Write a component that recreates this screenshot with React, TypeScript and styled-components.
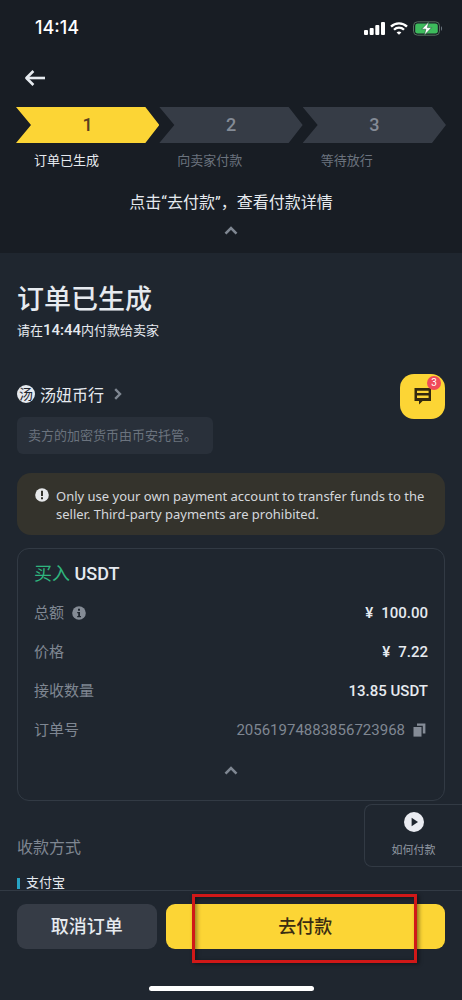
import React from "react";
import styled, { createGlobalStyle } from "styled-components";

const color = {
  header: "#181d24",
  page: "#1f262f",
  panel: "#29303a",
  step: "#363c46",
  line: "#323a44",
  yellow: "#fcd535",
  text: "#e6eaef",
  muted: "#7f8792",
  dim: "#6b737e",
  green: "#2fb57e",
};

const cjk = `"Noto Sans CJK SC", sans-serif`;

const GlobalStyle = createGlobalStyle`
  * { box-sizing: border-box; }
  body {
    margin: 0;
    background: ${color.page};
    color: ${color.text};
    font-family: Roboto, ${cjk};
  }
  button { font-family: inherit; border: 0; padding: 0; background: none; color: inherit; cursor: pointer; }
  h1, p, dl, dd, dt, h2 { margin: 0; font-weight: 400; }
  svg { display: block; }
`;

const Screen = styled.div`
  display: flex;
  flex-direction: column;
  height: 100vh;
`;

const Scroll = styled.main`
  flex: 1;
  min-height: 0;
  overflow-y: auto;
  scrollbar-width: none;
`;

const Header = styled.header`
  background: ${color.header};
  padding: 16px 16px 11px;
`;

const StatusBar = styled.div`
  display: flex;
  align-items: center;
  justify-content: space-between;
  height: 24px;
  padding: 0 3px 0 19px;
`;

const Clock = styled.span`
  font: 500 18px/24px Inter, sans-serif;
  color: #fff;
`;

const StatusIcons = styled.div`
  display: flex;
  align-items: center;
  gap: 5px;
`;

const BackButton = styled.button`
  display: flex;
  align-items: center;
  height: 40px;
  margin: 18px 0 9px 8px;
`;

const Steps = styled.ol`
  display: grid;
  grid-template-columns: repeat(3, 1fr);
  margin: 0;
  padding: 0;
  list-style: none;
`;

const Step = styled.li<{ $active?: boolean }>`
  color: ${(p) => (p.$active ? color.text : color.dim)};
`;

const StepArrow = styled.div<{ $active?: boolean }>`
  height: 36px;
  font: 500 18px/36px Roboto, sans-serif;
  text-align: center;
  color: ${(p) => (p.$active ? "#5a3f1e" : "#848b96")};
  background: ${(p) => (p.$active ? color.yellow : color.step)};
  clip-path: polygon(0 0, calc(100% - 14px) 0, 100% 50%, calc(100% - 14px) 100%, 0 100%, 15px 50%);
`;

const StepLabel = styled.div`
  padding: 8px 0 0 18px;
  font-size: 13px;
  line-height: 20px;
`;

const Hint = styled.p`
  margin-top: 20px;
  font-size: 16px;
  line-height: 24px;
  text-align: center;
`;

const Toggle = styled.button`
  display: flex;
  justify-content: center;
  align-items: center;
  width: 100%;
  height: 24px;
  margin-top: 3px;
  color: ${color.muted};
`;

const Content = styled.div`
  padding: 25px 17px 0;
`;

const Title = styled.h1`
  font: 500 27px/40px ${cjk};
`;

const Deadline = styled.p`
  margin-top: 2px;
  font-size: 13px;
  line-height: 20px;

  strong { font-size: 15px; font-weight: 500; }
`;

const Seller = styled.section`
  display: flex;
  justify-content: space-between;
  align-items: flex-start;
  margin-top: 33px;
`;

const SellerName = styled.button`
  display: flex;
  align-items: center;
  gap: 5px;
  height: 40px;
  font-size: 16px;
`;

const Avatar = styled.span`
  width: 18px;
  height: 18px;
  border-radius: 50%;
  background: ${color.text};
  color: ${color.page};
  font-size: 14px;
  line-height: 18px;
  text-align: center;
`;

const ChevronSlot = styled.span`
  padding-left: 5px;
  color: ${color.muted};
`;

const Tag = styled.p`
  margin-top: 3px;
  padding: 0 16px 0 11px;
  border-radius: 6px;
  background: ${color.panel};
  color: ${color.dim};
  font-size: 13px;
  line-height: 37px;
`;

const ChatButton = styled.button`
  position: relative;
  display: flex;
  align-items: center;
  justify-content: center;
  width: 45px;
  height: 45px;
  border-radius: 14px;
  background: ${color.yellow};
`;

const Badge = styled.span`
  position: absolute;
  top: 2px;
  right: 4px;
  width: 14px;
  height: 14px;
  border-radius: 50%;
  background: #f04a5a;
  color: #fff;
  font: 400 10px/14px Roboto, sans-serif;
  text-align: center;
`;

const Notice = styled.p`
  display: flex;
  gap: 7px;
  margin-top: 19px;
  padding: 14px 18px 12px;
  border-radius: 14px;
  background: #34332c;
  color: #d5d8dc;
  font: 400 13px/18px "Noto Sans", sans-serif;

  svg { flex: none; margin-top: 1px; }
`;

const Card = styled.section`
  margin-top: 13px;
  padding: 12px 16px 17px;
  border: 1px solid ${color.line};
  border-radius: 12px;
`;

const CardTitle = styled.h2`
  font-size: 18px;
  line-height: 26px;
  font-weight: 500;

  span { color: ${color.green}; font-weight: 400; }
`;

const Row = styled.div`
  display: flex;
  align-items: center;
  justify-content: space-between;
  height: 24px;
`;

const Rows = styled.dl`
  display: grid;
  gap: 15px;
  padding-top: 14px;
`;

const RowLabel = styled.dt`
  display: flex;
  align-items: center;
  gap: 8px;
  color: ${color.muted};
  font-size: 15px;
  line-height: 24px;
`;

const RowValue = styled.dd<{ $muted?: boolean }>`
  display: flex;
  align-items: center;
  gap: 8px;
  font-size: 15px;
  line-height: 24px;
  font-weight: ${(p) => (p.$muted ? 400 : 500)};
  color: ${(p) => (p.$muted ? color.muted : color.text)};
`;

const CopyButton = styled.button`
  padding-right: 2px;
`;

const CardToggle = styled(Toggle)`
  margin-top: 16px;
  margin-bottom: 1px;
`;

const SectionLabel = styled.h2`
  margin-top: 35px;
  color: ${color.muted};
  font-size: 16px;
  line-height: 24px;
`;

const Method = styled.p`
  display: flex;
  align-items: center;
  gap: 6px;
  margin-top: 14px;
  font-size: 13px;
  line-height: 18px;

  &::before {
    content: "";
    width: 3px;
    height: 11px;
    background: #27a3c4;
  }
`;

const Footer = styled.footer`
  position: relative;
  padding: 13px 17px 9px;
  border-top: 1px solid ${color.line};
`;

const Actions = styled.div`
  display: flex;
  gap: 9px;
`;

const ActionButton = styled.button<{ $primary?: boolean }>`
  position: relative;
  flex: ${(p) => (p.$primary ? "2 1 0" : "1 1 0")};
  height: 45px;
  border-radius: 9px;
  background: ${(p) => (p.$primary ? color.yellow : color.step)};
  color: ${(p) => (p.$primary ? "#3a2c12" : color.text)};
  font-size: 18px;
  line-height: 44px;
  font-weight: 500;
`;

const Highlight = styled.span`
  position: absolute;
  inset: -10px 28px -14px 26px;
  border: 3px solid #d01818;
  box-shadow: 2px 1px 4px rgba(0, 0, 0, 0.45), inset 2px 1px 4px rgba(0, 0, 0, 0.4);
  pointer-events: none;
`;

const HomeIndicator = styled.div`
  width: 165px;
  height: 5px;
  margin: 37px auto 0;
  border-radius: 3px;
  background: #fff;
`;

const HelpButton = styled.button`
  position: absolute;
  right: 0;
  bottom: calc(100% + 24px);
  display: flex;
  flex-direction: column;
  align-items: center;
  gap: 11px;
  width: 98px;
  height: 63px;
  padding-top: 7px;
  border: 1px solid ${color.line};
  border-right: 0;
  border-radius: 8px 0 0 8px;
  background: ${color.page};
  color: #9299a3;
  font-size: 11px;
  line-height: 16px;
`;

const Signal = () => (
  <svg width="21" height="13" viewBox="0 0 21 13" fill="#fff" aria-hidden="true">
    <rect x="0" y="8" width="4" height="5" rx="1" />
    <rect x="5.7" y="6" width="4" height="7" rx="1" />
    <rect x="11.3" y="3" width="4" height="10" rx="1" />
    <rect x="17" y="0" width="4" height="13" rx="1" />
  </svg>
);

const Wifi = () => (
  <svg width="18" height="13" viewBox="0 0 18 13" fill="none" stroke="#fff" strokeWidth="2.3" aria-hidden="true">
    <path d="M1 4.6 C5.4 0.2 12.6 0.2 17 4.6" />
    <path d="M4 7.8 C6.8 5 11.2 5 14 7.8" />
    <path d="M6.6 10.4 C8 9.2 10 9.2 11.4 10.4 L9 12.8 Z" fill="#fff" stroke="none" />
  </svg>
);

const Battery = () => (
  <svg width="30" height="15" viewBox="0 0 30 15" aria-hidden="true">
    <rect x="0.5" y="0.8" width="26" height="13.4" rx="4" fill="none" stroke="#56705f" />
    <rect x="2.2" y="2.4" width="22.6" height="10.2" rx="2.4" fill="#3dbb5c" />
    <path d="M28 5.2 C29.4 5.7 29.4 9.3 28 9.8 Z" fill="#68727c" />
    <path d="M15.8 0.8 L8.6 8.2 H12.8 L11.4 14.2 L18.6 6.6 H14.4 Z" fill="#fff" stroke="#24583a" strokeWidth="0.6" />
  </svg>
);

const BackArrow = () => (
  <svg width="22" height="18" viewBox="0 0 22 18" fill="none" stroke={color.text} strokeWidth="2.6" aria-hidden="true">
    <path d="M21 9 H2.6" />
    <path d="M9.4 2 L2.4 9 L9.4 16" strokeLinejoin="round" />
  </svg>
);

const ChevronUp = () => (
  <svg width="14" height="9" viewBox="0 0 14 9" fill="none" stroke="currentColor" strokeWidth="2.6" aria-hidden="true">
    <path d="M1.5 7.6 L7 2 L12.5 7.6" />
  </svg>
);

const ChevronRight = () => (
  <svg width="8" height="12" viewBox="0 0 8 12" fill="none" stroke="currentColor" strokeWidth="2.4" aria-hidden="true">
    <path d="M1.2 1.2 L6 6 L1.2 10.8" />
  </svg>
);

const ChatIcon = () => (
  <svg width="18" height="20" viewBox="0 0 18 20" fill="#33290f" aria-hidden="true">
    <path fillRule="evenodd" d="M0.5 1 H17 V14 H8.6 L5 17.6 V14 H0.5 Z M3 3.8 V6 H14.6 V3.8 Z M3 8.6 V11 H14.6 V8.6 Z" />
  </svg>
);

const AlertIcon = () => (
  <svg width="14" height="14" viewBox="0 0 14 14" aria-hidden="true">
    <circle cx="7" cy="7" r="6.8" fill="#e6e8ea" />
    <path d="M6 2.8 H8 V8 H6 Z M6 9.2 H8 V11.2 H6 Z" fill="#34332c" />
  </svg>
);

const InfoIcon = () => (
  <svg width="14" height="14" viewBox="0 0 14 14" aria-hidden="true">
    <circle cx="7" cy="7" r="6.8" fill="#848b95" />
    <path d="M6 2.8 H8 V4.8 H6 Z M5.2 6 H8 V10 H9 V11.2 H5.2 V10 H6.2 V7.2 H5.2 Z" fill={color.page} />
  </svg>
);

const CopyIcon = () => (
  <svg width="13" height="14" viewBox="0 0 13 14" fill="#858c97" aria-hidden="true">
    <rect x="0.5" y="4" width="8" height="9.6" />
    <path d="M4 0.5 H12.4 V10.4 H9.8 V2.8 H4 Z" />
  </svg>
);

const PlayIcon = () => (
  <svg width="20" height="20" viewBox="0 0 20 20" aria-hidden="true">
    <circle cx="10" cy="10" r="10" fill="#eaecf2" />
    <path d="M7.6 5.8 L14 10 L7.6 14.2 Z" fill={color.page} />
  </svg>
);

const steps = ["订单已生成", "向卖家付款", "等待放行"];

export default function App() {
  return (
    <Screen>
      <GlobalStyle />
      <Scroll>
        <Header>
          <StatusBar>
            <Clock>14:14</Clock>
            <StatusIcons>
              <Signal />
              <Wifi />
              <Battery />
            </StatusIcons>
          </StatusBar>
          <BackButton aria-label="返回">
            <BackArrow />
          </BackButton>
          <Steps>
            {steps.map((label, i) => (
              <Step key={label} $active={i === 0}>
                <StepArrow $active={i === 0}>{i + 1}</StepArrow>
                <StepLabel>{label}</StepLabel>
              </Step>
            ))}
          </Steps>
          <Hint>点击“去付款”，查看付款详情</Hint>
          <Toggle aria-label="收起">
            <ChevronUp />
          </Toggle>
        </Header>

        <Content>
          <Title>订单已生成</Title>
          <Deadline>
            请在<strong>14:44</strong>内付款给卖家
          </Deadline>

          <Seller>
            <div>
              <SellerName>
                <Avatar>汤</Avatar>
                汤妞币行
                <ChevronSlot>
                  <ChevronRight />
                </ChevronSlot>
              </SellerName>
              <Tag>卖方的加密货币由币安托管。</Tag>
            </div>
            <ChatButton aria-label="聊天">
              <ChatIcon />
              <Badge>3</Badge>
            </ChatButton>
          </Seller>

          <Notice>
            <AlertIcon />
            <span>Only use your own payment account to transfer funds to the seller. Third-party payments are prohibited.</span>
          </Notice>

          <Card>
            <CardTitle>
              <span>买入</span> USDT
            </CardTitle>
            <Rows>
              <Row>
                <RowLabel>
                  总额 <InfoIcon />
                </RowLabel>
                <RowValue>
                  <span>¥</span>
                  <span>100.00</span>
                </RowValue>
              </Row>
              <Row>
                <RowLabel>价格</RowLabel>
                <RowValue>
                  <span>¥</span>
                  <span>7.22</span>
                </RowValue>
              </Row>
              <Row>
                <RowLabel>接收数量</RowLabel>
                <RowValue>13.85 USDT</RowValue>
              </Row>
              <Row>
                <RowLabel>订单号</RowLabel>
                <RowValue $muted>
                  20561974883856723968
                  <CopyButton aria-label="复制">
                    <CopyIcon />
                  </CopyButton>
                </RowValue>
              </Row>
            </Rows>
            <CardToggle aria-label="收起">
              <ChevronUp />
            </CardToggle>
          </Card>

          <SectionLabel>收款方式</SectionLabel>
          <Method>支付宝</Method>
        </Content>
      </Scroll>

      <Footer>
        <HelpButton>
          <PlayIcon />
          如何付款
        </HelpButton>
        <Actions>
          <ActionButton>取消订单</ActionButton>
          <ActionButton $primary>
            去付款
            <Highlight />
          </ActionButton>
        </Actions>
        <HomeIndicator />
      </Footer>
    </Screen>
  );
}
